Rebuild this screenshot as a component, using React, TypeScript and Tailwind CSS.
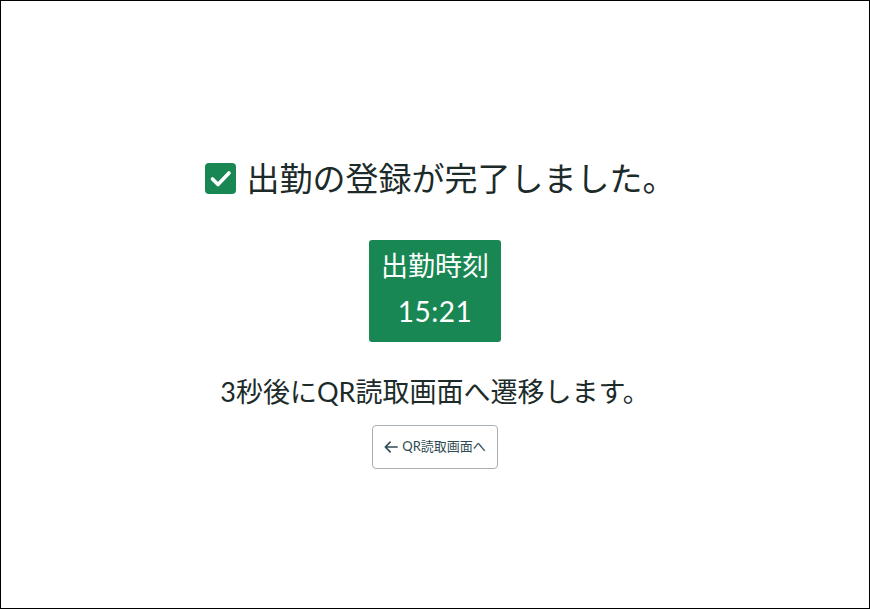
import React from 'react';

const font = { fontFamily: 'Lato, "Noto Sans CJK JP", sans-serif' };

export default function App() {
  return (
    <div
      className="h-screen w-full border border-black bg-white text-[#1c2b29] flex flex-col items-center pt-[156px]"
      style={font}
    >
      <h1 className="ml-[10px] flex items-center gap-[11px] text-[33px] leading-[42px] font-normal">
        <svg width="31" height="31" viewBox="0 0 31 31" className="shrink-0">
          <rect x="0" y="0" width="31" height="31" rx="4" fill="#198754" />
          <path d="M7.5 16 L13 21.5 L24 10" stroke="#fff" strokeWidth="3.6" fill="none" strokeLinecap="round" strokeLinejoin="round" />
        </svg>
        <span>出勤の登録が完了しました。</span>
      </h1>

      <div className="mt-[41px] w-[132px] h-[102px] pb-[5px] rounded-[3px] bg-[#198754] text-white flex flex-col items-center justify-center gap-[13px]">
        <div className="text-[27px] leading-[32px]">出勤時刻</div>
        <div className="text-[28px] leading-[32px] tracking-[0.5px]">15:21</div>
      </div>

      <p className="mt-[32px] text-[27px] leading-[36px]">3秒後にQR読取画面へ遷移します。</p>

      <button className="mt-[15px] w-[126px] h-[44px] rounded-[4px] border border-[#a9b0b5] bg-white text-[#2d4a52] text-[13px] flex items-center justify-center gap-[4px]">
        <svg width="14" height="14" viewBox="0 0 16 16" fill="none" stroke="currentColor" strokeWidth="1.9" strokeLinecap="round" strokeLinejoin="round">
          <path d="M15 8 H1.5 M7 2.5 L1.5 8 L7 13.5" />
        </svg>
        <span>QR読取画面へ</span>
      </button>
    </div>
  );
}
